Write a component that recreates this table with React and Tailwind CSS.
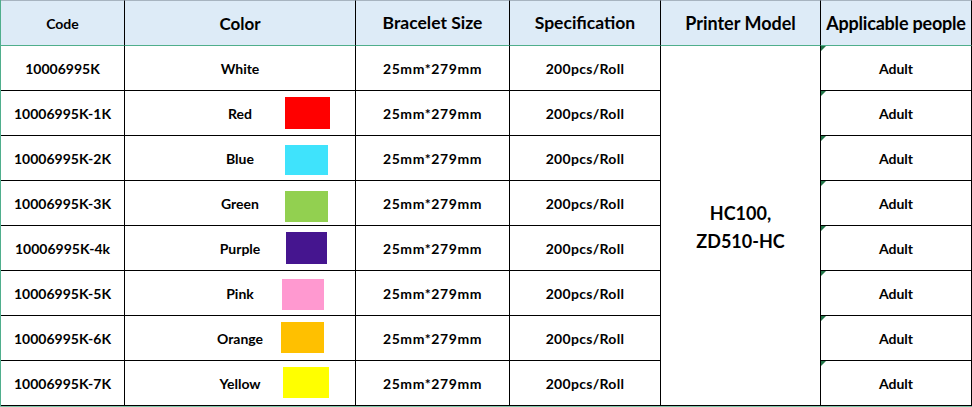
import React from "react";

const rows = [
  { code: "10006995K", color: "White", swatch: null },
  { code: "10006995K-1K", color: "Red", swatch: "left-[160px] top-[6px] h-[32px] w-[45px] bg-[#ff0000]" },
  { code: "10006995K-2K", color: "Blue", swatch: "left-[160px] top-[9px] h-[30px] w-[43px] bg-[#3fe3fc]" },
  { code: "10006995K-3K", color: "Green", swatch: "left-[160px] top-[10px] h-[31px] w-[43px] bg-[#92d050]" },
  { code: "10006995K-4k", color: "Purple", swatch: "left-[161px] top-[6px] h-[32px] w-[41px] bg-[#45158f]" },
  { code: "10006995K-5K", color: "Pink", swatch: "left-[157px] top-[8px] h-[31px] w-[42px] bg-[#ff99d0]" },
  { code: "10006995K-6K", color: "Orange", swatch: "left-[156px] top-[6px] h-[31px] w-[43px] bg-[#ffc000]" },
  { code: "10006995K-7K", color: "Yellow", swatch: "left-[158px] top-[6px] h-[31px] w-[46px] bg-[#ffff00]" },
];

const rowStart = [
  "row-start-2",
  "row-start-3",
  "row-start-4",
  "row-start-5",
  "row-start-6",
  "row-start-7",
  "row-start-8",
  "row-start-9",
];

const head = "flex h-[46px] items-center justify-center border-t border-r border-b border-t-[#a7b4c0] border-r-black border-b-[#4fae8c] bg-[#ddebf7] pt-px font-bold text-black";
const cell = "flex h-[45px] items-center justify-center border-r border-b border-black pt-px text-[14px] font-bold text-black";

export default function App() {
  return (
    <div className="h-[407px] w-[972px] overflow-hidden bg-white font-['Lato','Liberation_Sans',sans-serif]">
      <div className="grid grid-cols-[124px_231px_154px_151px_160px_151px] border-l border-[#4fae8c]">
        {/* header */}
        <div className={head + " text-[14px]"}>Code</div>
        <div className={head + " text-[17px]"}>Color</div>
        <div className={head + " text-[17.5px]"}>Bracelet Size</div>
        <div className={head + " text-[17.5px]"}>Specification</div>
        <div className={head + " text-[18px]"}>Printer Model</div>
        <div className={head + " text-[18px] tracking-[-0.2px]"}>Applicable people</div>

        {rows.map((r, i) => (
          <React.Fragment key={r.code}>
            <div className={cell + " col-start-1 " + rowStart[i]}>{r.code}</div>
            <div className={cell + " relative col-start-2 " + rowStart[i]}>
              <span>{r.color}</span>
              {r.swatch && <div className={"absolute " + r.swatch} />}
            </div>
            <div className={cell + " col-start-3 tracking-[0.6px] " + rowStart[i]}>25mm*279mm</div>
            <div className={cell + " col-start-4 tracking-[0.3px] " + rowStart[i]}>200pcs/Roll</div>
            <div className={cell + " relative col-start-6 " + rowStart[i]}>
              <div className="absolute left-0 top-0 h-0 w-0 border-t-[5px] border-r-[5px] border-t-[#217346] border-r-transparent" />
              Adult
            </div>
          </React.Fragment>
        ))}

        {/* merged printer model cell */}
        <div className="col-start-5 row-span-8 row-start-2 flex flex-col items-center justify-center border-r border-b border-black pt-[2px] text-[18px] font-bold leading-[28px] text-black">
          <div>HC100,</div>
          <div>ZD510-HC</div>
        </div>
      </div>
      <div className="h-px w-full bg-[#7fc4a8]" />
    </div>
  );
}
